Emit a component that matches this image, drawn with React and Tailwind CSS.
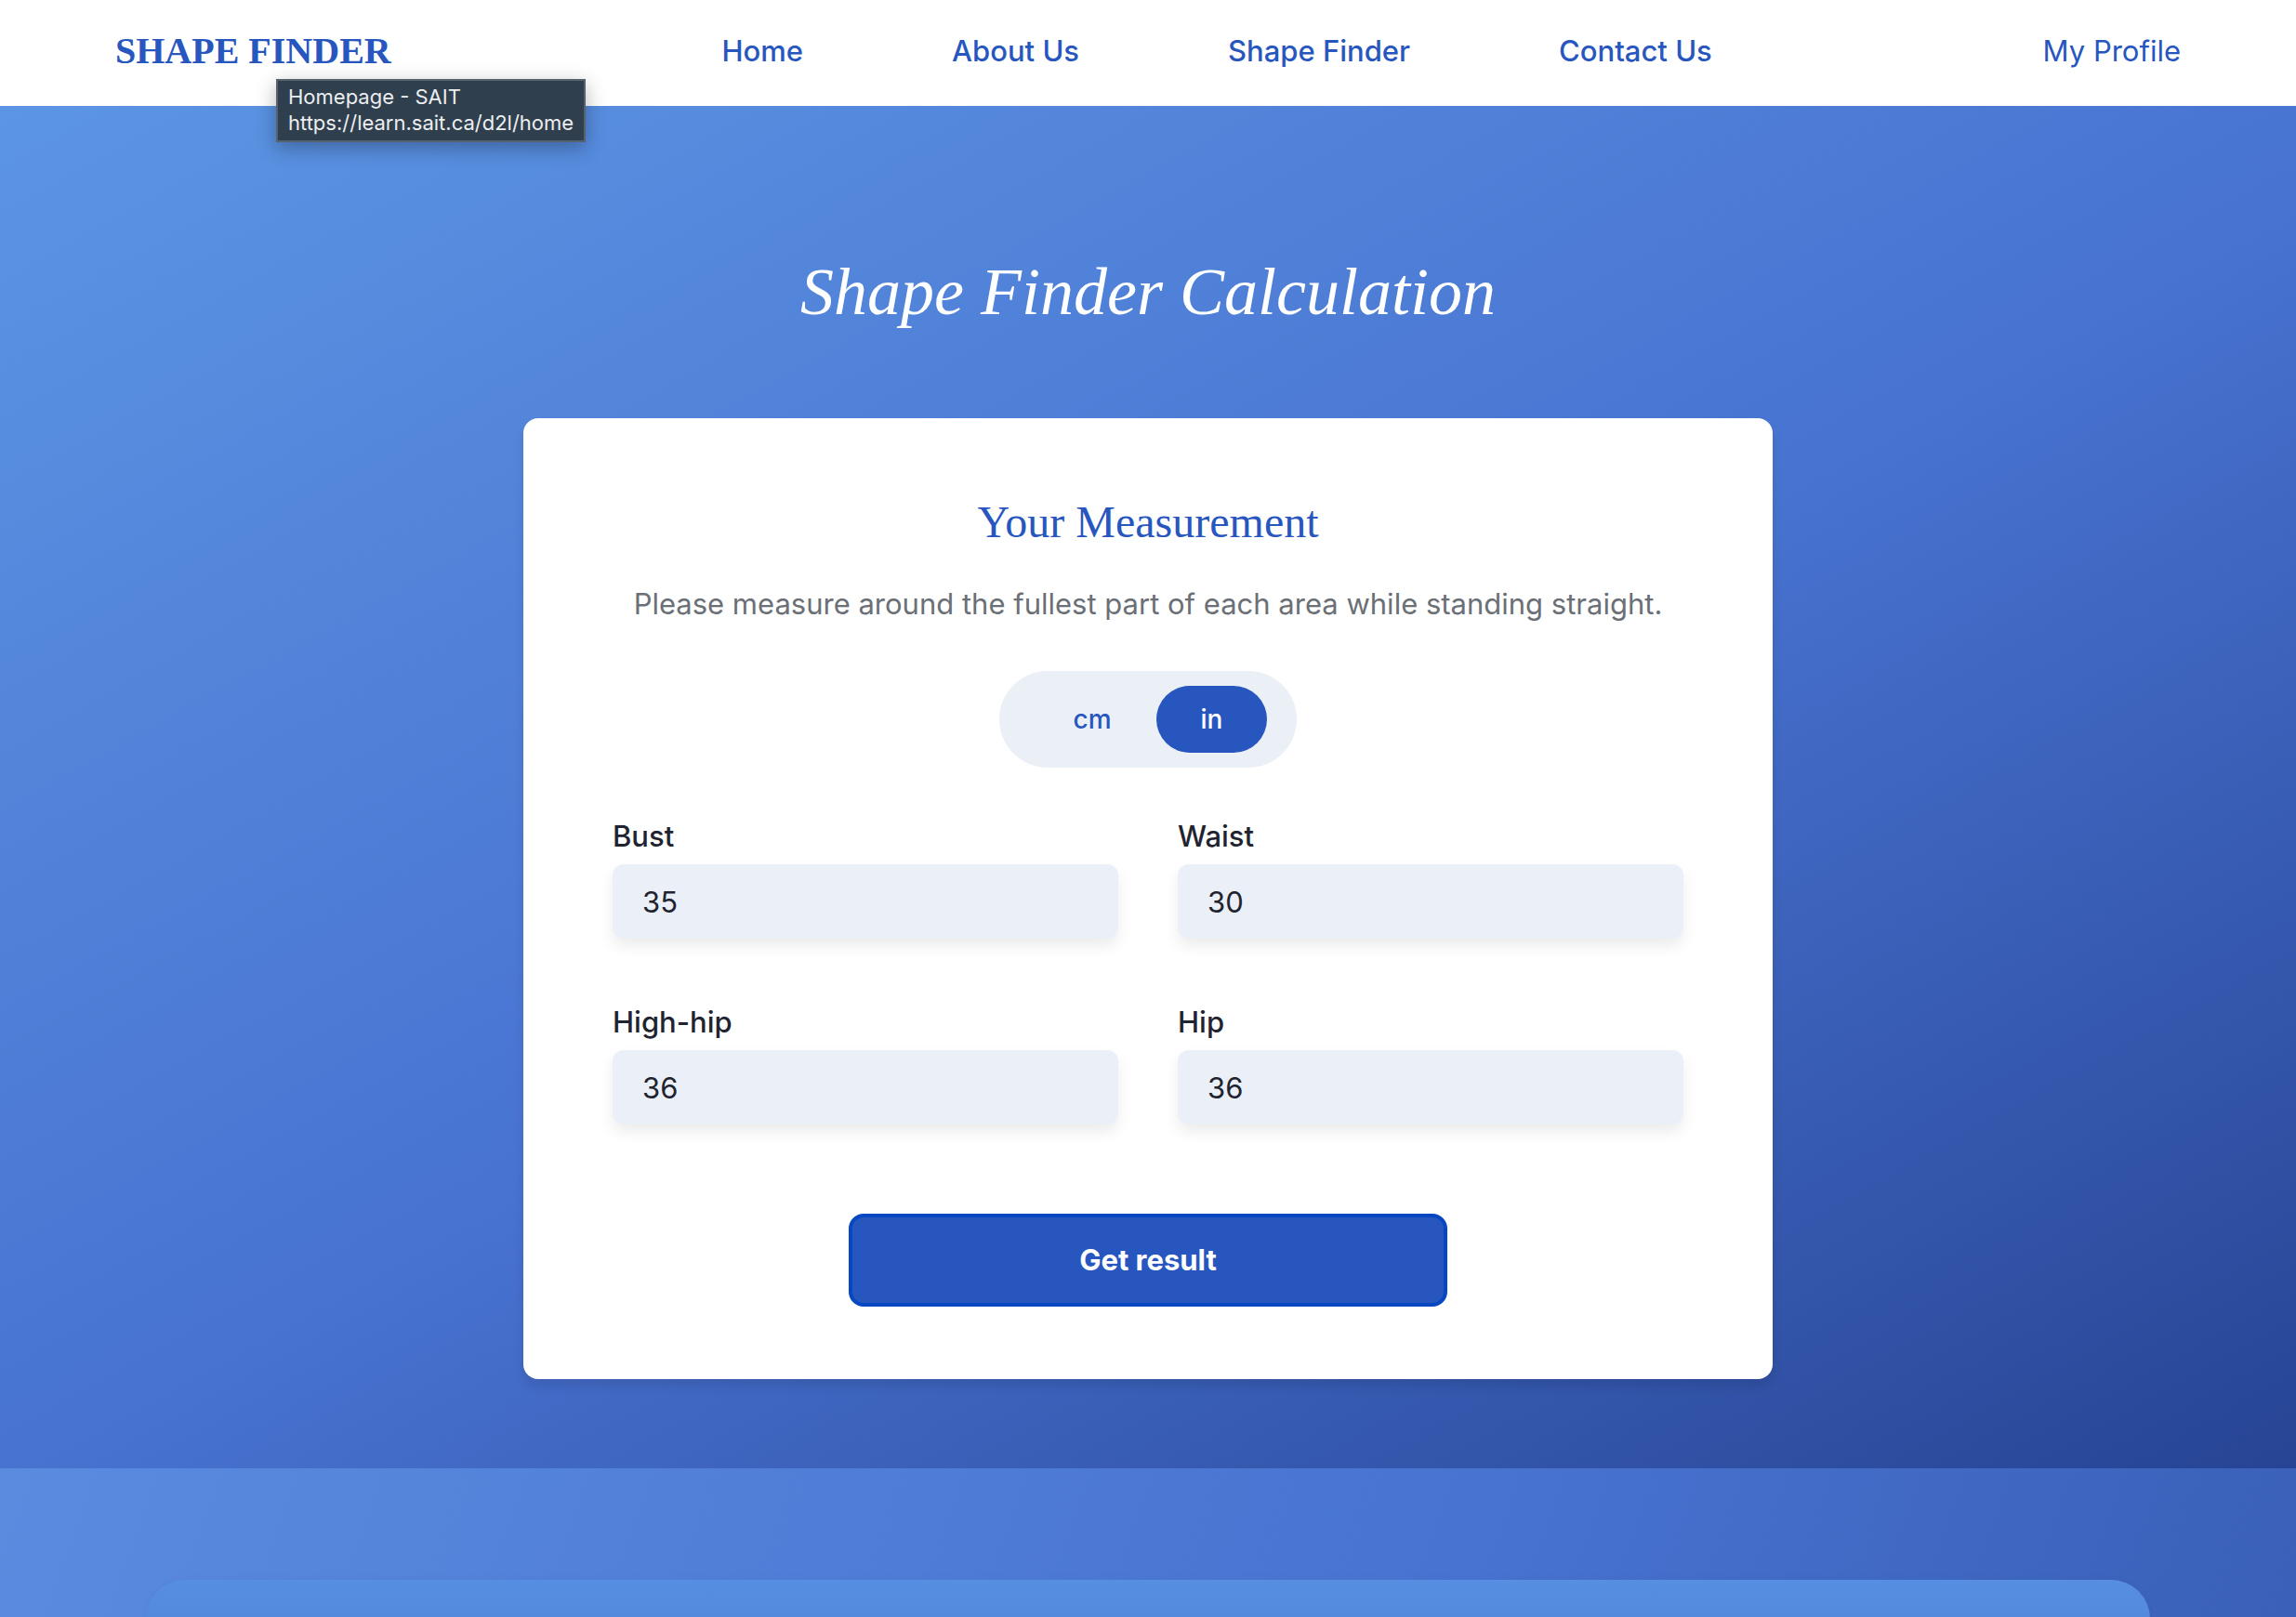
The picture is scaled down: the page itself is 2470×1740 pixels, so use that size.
import { useState } from "react";

const links = ["Home", "About Us", "Shape Finder", "Contact Us"];

const fields = [
  { id: "bust", label: "Bust", value: "35" },
  { id: "waist", label: "Waist", value: "30" },
  { id: "high-hip", label: "High-hip", value: "36" },
  { id: "hip", label: "Hip", value: "36" },
];

function Header() {
  return (
    <header className="relative flex h-[114px] items-center justify-between bg-white px-[124px] pb-1 text-[31px] leading-10 text-[#2856bf]">
      <a href="#top" className="font-['Liberation_Serif',serif] text-[40px] font-bold">
        SHAPE FINDER
      </a>
      <nav className="flex gap-40 font-medium">
        {links.map((link) => (
          <a key={link} href="#top">
            {link}
          </a>
        ))}
      </nav>
      <a href="#profile">My Profile</a>
      <div
        role="tooltip"
        className="absolute top-[85px] left-[297px] z-10 border-2 border-[#56636e] bg-[#2f3f4e] px-[11px] pt-[3px] pb-[5px] text-[22px] leading-7 whitespace-nowrap text-[#eceeef] shadow-[0_6px_20px_rgba(0,0,0,0.3)]"
      >
        Homepage - SAIT
        <br />
        https://learn.sait.ca/d2l/home
      </div>
    </header>
  );
}

function UnitToggle() {
  const [unit, setUnit] = useState("in");
  return (
    <div className="mt-12 flex rounded-full bg-[#ebf0f7] px-8 py-4">
      {["cm", "in"].map((name) => (
        <button
          key={name}
          type="button"
          aria-pressed={unit === name}
          onClick={() => setUnit(name)}
          className={
            unit === name
              ? "h-[72px] rounded-full bg-[#2856bf] px-12 text-[28px] font-medium text-white"
              : "h-[72px] rounded-full px-12 text-[28px] font-medium text-[#2856bf]"
          }
        >
          {name}
        </button>
      ))}
    </div>
  );
}

function MeasurementForm() {
  return (
    <form
      onSubmit={(event) => event.preventDefault()}
      className="flex w-full max-w-[1344px] flex-col items-center rounded-2xl bg-white px-24 pt-20 pb-[78px] shadow-[0_8px_12px_rgba(0,0,0,0.1)]"
    >
      <h2 className="font-['Liberation_Serif',serif] text-[48px] leading-16 text-[#2856bf]">
        Your Measurement
      </h2>
      <p className="mt-8 text-[31px] leading-12 text-[#6b6f76]">
        Please measure around the fullest part of each area while standing straight.
      </p>
      <UnitToggle />
      <div className="mt-12 grid w-full grid-cols-2 gap-x-16 gap-y-16">
        {fields.map((field) => (
          <div key={field.id} className="flex flex-col gap-1">
            <label htmlFor={field.id} className="text-[31px] leading-[52px] font-medium text-[#1f2430]">
              {field.label}
            </label>
            <input
              id={field.id}
              type="text"
              inputMode="decimal"
              defaultValue={field.value}
              className="h-20 w-full rounded-xl bg-[#ebf0f8] px-8 text-[31px] text-[#1f2430] shadow-[0_8px_16px_rgba(0,0,0,0.08)]"
            />
          </div>
        ))}
      </div>
      <button
        type="submit"
        className="mt-24 h-[100px] w-full max-w-[644px] rounded-2xl border-4 border-[#0847c2] bg-[#2856bf] text-[31px] font-bold text-white"
      >
        Get result
      </button>
    </form>
  );
}

export default function App() {
  return (
    <div className="flex min-h-screen flex-col font-['Inter',sans-serif]">
      <Header />
      <main className="flex flex-1 flex-col">
        <section className="flex flex-col items-center bg-[linear-gradient(151deg,#5c95e3,#4873d1_52%,#274494)] pt-[156px] pb-24">
          <h1 className="mb-[92px] font-['Liberation_Serif',serif] text-[72px] leading-[88px] text-white italic">
            Shape Finder Calculation
          </h1>
          <MeasurementForm />
        </section>
        <section className="flex flex-1 flex-col bg-[linear-gradient(110deg,#5a8bdf,#4873d1_64%,#3a60b8)] px-[157px] pt-[120px]">
          <div className="min-h-[42px] flex-1 rounded-t-[48px] bg-linear-to-b from-[#568ee2] to-[#548add] shadow-[0_0_8px_rgba(0,0,0,0.04)]" />
        </section>
      </main>
    </div>
  );
}
